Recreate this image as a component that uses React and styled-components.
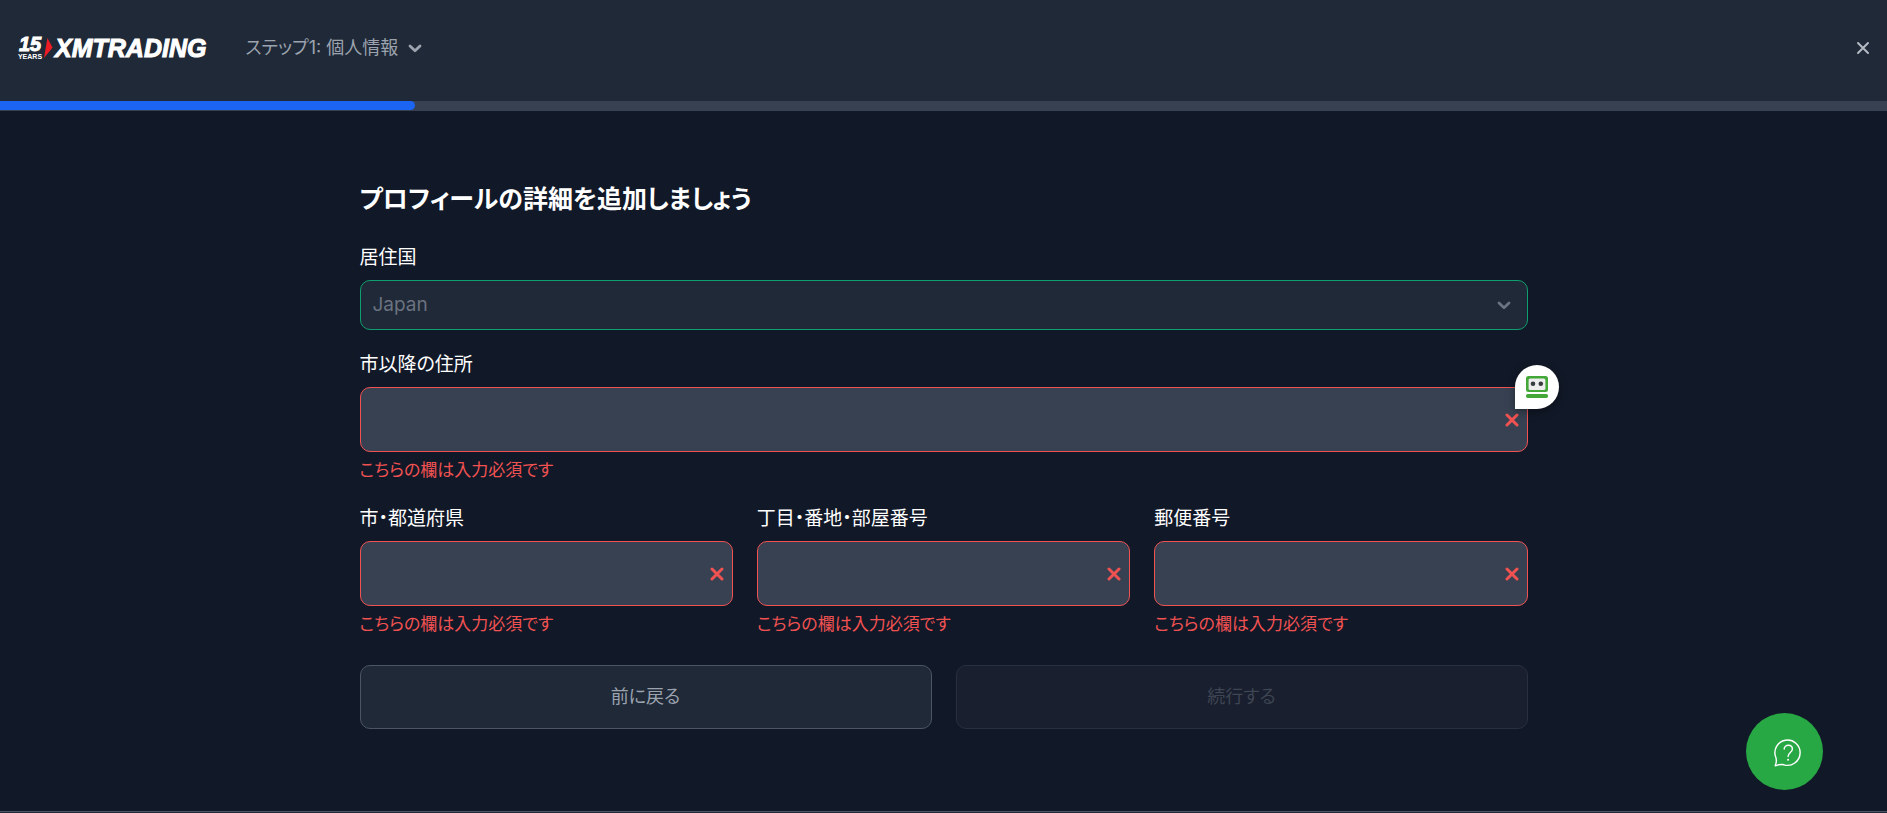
import React, { useState } from 'react'
import styled, { createGlobalStyle } from 'styled-components'

const ERROR_TEXT = 'こちらの欄は入力必須です'

const smallFields = [
	{ id: 'city', label: '市・都道府県' },
	{ id: 'street', label: '丁目・番地・部屋番号' },
	{ id: 'zip', label: '郵便番号' },
]

const CrossIcon = ({ size = 14, weight = 3 }) => (
	<svg width={size} height={size} viewBox="0 0 14 14" fill="none" aria-hidden="true">
		<path
			d="M2 2l10 10M12 2l-10 10"
			stroke="currentColor"
			strokeWidth={weight}
			strokeLinecap="round"
		/>
	</svg>
)

const ChevronIcon = () => (
	<svg width="14" height="9" viewBox="0 0 14 9" fill="none" aria-hidden="true">
		<path
			d="M2 2l5 4.8L12 2"
			stroke="currentColor"
			strokeWidth="2.8"
			strokeLinecap="round"
			strokeLinejoin="round"
		/>
	</svg>
)

const RobotIcon = () => (
	<svg width="22" height="22" viewBox="0 0 22 22" aria-hidden="true">
		<rect width="22" height="16" rx="2.5" fill="#43a838" />
		<rect x="2.6" y="2.4" width="16.8" height="11.6" rx="1.6" fill="#ececec" />
		<circle cx="7" cy="7.8" r="2.3" fill="#373b40" />
		<circle cx="14.8" cy="7.8" r="2.3" fill="#373b40" />
		<rect y="18" width="22" height="4" rx="1.8" fill="#43a838" />
	</svg>
)

const HelpIcon = () => (
	<svg width="28" height="28" viewBox="0 0 28 28" fill="none" aria-hidden="true">
		<g stroke="#fff" strokeWidth="1.4" strokeLinecap="round" strokeLinejoin="round">
			<path d="M1.2 26.8c1.3-2.8 1.6-5 .7-8.2A12.6 12.6 0 1 1 10 25.8c-3-.7-5.800 0-8.800 1z" />
			<path d="M10.200 10c0-5 8.200-4.900 8.200.1 0 3.600-4.300 3.400-4.300 7.400" />
		</g>
		<circle cx="14.1" cy="20.800" r="1" fill="#fff" />
	</svg>
)

const Field = ({ id, label, badge }) => {
	const [value, setValue] = useState('')
	return (
		<FieldBox>
			<Label htmlFor={id}>{label}</Label>
			<Control>
				<Input
					id={id}
					type="text"
					value={value}
					aria-invalid={!value}
					aria-describedby={`${id}-error`}
					onChange={e => setValue(e.target.value)}
				/>
				{!value && (
					<ControlIcon $right={9} $color="#f05252">
						<CrossIcon />
					</ControlIcon>
				)}
				{badge && (
					<Badge type="button" aria-label="自動入力">
						<RobotIcon />
					</Badge>
				)}
			</Control>
			<ErrorText id={`${id}-error`}>{!value && ERROR_TEXT}</ErrorText>
		</FieldBox>
	)
}

const App = () => (
	<>
		<GlobalStyle />
		<Page>
			<Header>
				<Logo href="#" aria-label="XMTrading">
					<Years>
						<strong>15</strong>
						<small>YEARS</small>
					</Years>
					<svg width="9" height="20" viewBox="0 0 9 20" aria-hidden="true">
						<path d="M3.4 0L8.6 9.6L0 20z" fill="#ed1c24" />
					</svg>
					<Brand>XMTRADING</Brand>
				</Logo>
				<StepButton type="button">
					ステップ1: 個人情報
					<ChevronIcon />
				</StepButton>
				<CloseButton type="button" aria-label="閉じる">
					<CrossIcon weight={2} />
				</CloseButton>
			</Header>
			<Track>
				<Bar $percent={22} />
			</Track>
			<Main>
				<Form onSubmit={e => e.preventDefault()}>
					<Title>プロフィールの詳細を追加しましょう</Title>
					<FieldBox>
						<Label htmlFor="country">居住国</Label>
						<Control>
							<Select id="country" disabled defaultValue="JP">
								<option value="JP">Japan</option>
							</Select>
							<ControlIcon $right={17} $color="#6b7280">
								<ChevronIcon />
							</ControlIcon>
						</Control>
					</FieldBox>
					<Field id="address" label="市以降の住所" badge />
					<Row $columns={3}>
						{smallFields.map(field => (
							<Field key={field.id} {...field} />
						))}
					</Row>
					<Row $columns={2}>
						<Button type="button">前に戻る</Button>
						<Button type="submit" disabled>
							続行する
						</Button>
					</Row>
				</Form>
			</Main>
			<Footer />
			<HelpButton type="button" aria-label="ヘルプ">
				<HelpIcon />
			</HelpButton>
		</Page>
	</>
)

const GlobalStyle = createGlobalStyle`
	* {
		box-sizing: border-box;
	}
	body {
		margin: 0;
		background-color: #111827;
	}
	body, button, input, select {
		font-family: Inter, "Noto Sans CJK JP", sans-serif;
		font-size: 18px;
		line-height: 28px;
		font-feature-settings: "palt";
	}
`

const Page = styled.div`
	display: flex;
	flex-direction: column;
	min-height: 100vh;
	color: #fff;
`

const Header = styled.header`
	display: flex;
	align-items: center;
	padding: 26px 17px 31px 16px;
	background-color: #1f2937;
`

const Logo = styled.a`
	display: flex;
	align-items: center;
	color: #fff;
	text-decoration: none;
	font-family: "Liberation Sans", Arial, sans-serif;
	font-weight: 700;
`

const Years = styled.span`
	display: flex;
	flex-direction: column;
	align-items: center;
	width: 28px;
	strong {
		font-size: 20px;
		font-style: italic;
		line-height: 17px;
		-webkit-text-stroke: 1px #fff;
	}
	small {
		font-size: 7px;
		line-height: 8px;
	}
`

const Brand = styled.span`
	padding-left: 2px;
	font-size: 25px;
	font-style: italic;
	line-height: 28px;
	-webkit-text-stroke: 1px #fff;
`

const StepButton = styled.button`
	display: flex;
	align-items: center;
	gap: 10px;
	margin-left: 31px;
	padding: 8px;
	border: none;
	background: none;
	color: #9ca3af;
	cursor: pointer;
`

const CloseButton = styled.button`
	display: flex;
	margin-left: auto;
	padding: 0;
	border: none;
	background: none;
	color: #b4bac4;
	cursor: pointer;
`

const Track = styled.div`
	height: 10px;
	background-color: #374151;
`

const Bar = styled.div`
	width: ${({ $percent }) => $percent}%;
	height: 9px;
	border-radius: 0 5px 5px 0;
	background-color: #1c64f2;
`

const Main = styled.main`
	flex: 1;
	padding: 70px 24px 80px;
`

const Form = styled.form`
	display: flex;
	flex-direction: column;
	gap: 21px;
	max-width: 1168px;
	margin: 0 auto;
`

const Title = styled.h1`
	margin: 0 0 6px;
	font-size: 25px;
	font-weight: 700;
	line-height: 36px;
`

const FieldBox = styled.div`
	display: flex;
	flex-direction: column;
`

const Label = styled.label`
	margin-bottom: 8px;
	font-size: 19px;
`

const Control = styled.div`
	position: relative;
`

const Input = styled.input`
	display: block;
	width: 100%;
	height: 65px;
	padding: 0 36px 0 12px;
	border: 1px solid #f05252;
	border-radius: 10px;
	background-color: #374151;
	color: #fff;
	font-size: 19px;
	&:focus {
		outline: none;
	}
`

const Select = styled.select`
	display: block;
	width: 100%;
	height: 50px;
	padding: 0 36px 0 12px;
	border: 1px solid #0e9f6e;
	border-radius: 10px;
	background-color: #1f2937;
	color: #6b7280;
	font-size: 19px;
	opacity: 1;
	appearance: none;
`

const ControlIcon = styled.span`
	position: absolute;
	top: 0;
	bottom: 0;
	right: ${({ $right }) => $right}px;
	display: flex;
	align-items: center;
	color: ${({ $color }) => $color};
	pointer-events: none;
`

const Badge = styled.button`
	position: absolute;
	top: -22px;
	right: -31px;
	display: flex;
	align-items: center;
	justify-content: center;
	width: 44px;
	height: 44px;
	padding: 0;
	border: none;
	border-radius: 22px 22px 22px 0;
	background-color: #fff;
	box-shadow: 0 3px 8px rgba(0, 0, 0, 0.35);
	cursor: pointer;
`

const ErrorText = styled.p`
	min-height: 28px;
	margin: 4px 0 0;
	color: #f05252;
	font-size: 17px;
`

const Row = styled.div`
	display: grid;
	grid-template-columns: repeat(${({ $columns }) => $columns}, 1fr);
	gap: 24px;
	&:last-child {
		margin-top: 6px;
	}
`

const Button = styled.button`
	height: 64px;
	border: 1px solid #4b5563;
	border-radius: 10px;
	background-color: #1f2937;
	color: #9ca3af;
	cursor: pointer;
	&:disabled {
		border-color: #282f3e;
		background-color: #191f2e;
		color: #3e4553;
		cursor: default;
	}
`

const Footer = styled.footer`
	height: 2px;
	border-top: 1px solid #4b5563;
	background-color: #1f2937;
`

const HelpButton = styled.button`
	position: fixed;
	right: 64px;
	bottom: 23px;
	display: flex;
	align-items: center;
	justify-content: center;
	width: 77px;
	height: 77px;
	padding: 2px 0 0 6px;
	border: none;
	border-radius: 50%;
	background-color: #28a745;
	cursor: pointer;
`

export default App
